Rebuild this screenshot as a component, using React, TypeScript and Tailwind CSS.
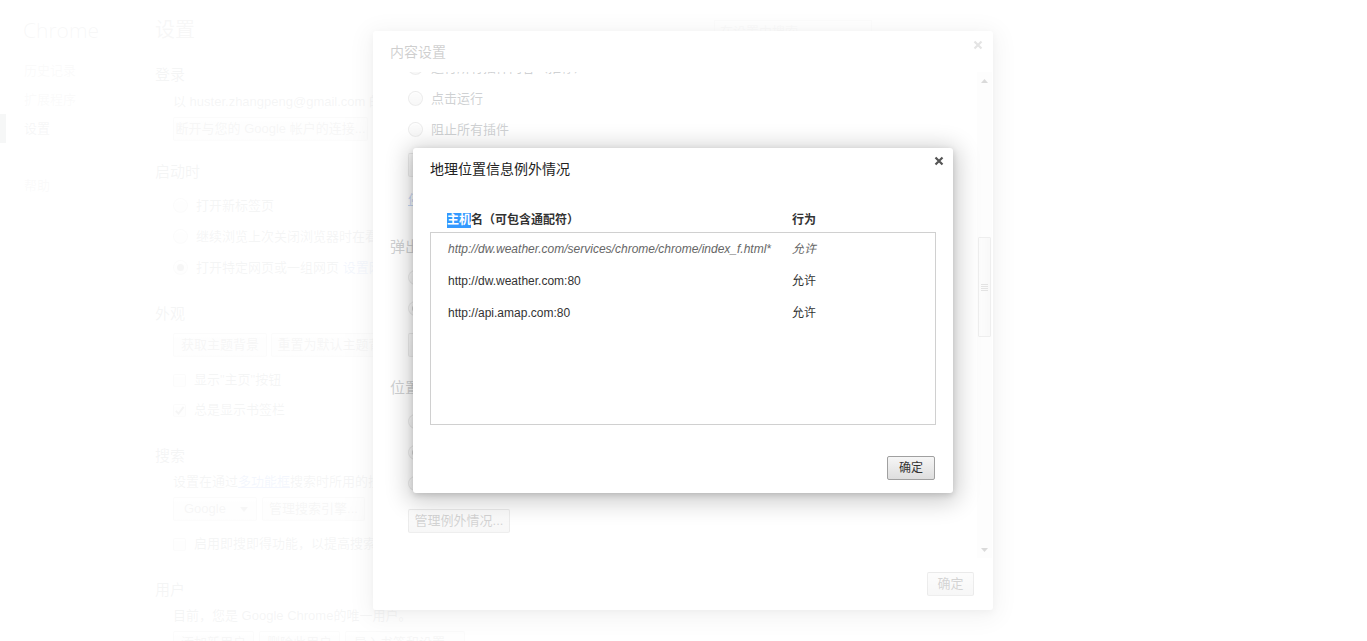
import type { ReactNode } from "react";

const FONT = "font-['Liberation_Sans','Noto_Sans_CJK_SC',sans-serif]";

function Radio({ checked = false }: { checked?: boolean }) {
  return (
    <span className="flex h-[15px] w-[15px] shrink-0 items-center justify-center rounded-full border border-black/25 bg-linear-to-b from-[#f2f2f2] to-[#dedede] shadow-[inset_0_1px_1px_white]">
      {checked && <span className="h-[7px] w-[7px] rounded-full bg-[#4a4a4a]" />}
    </span>
  );
}

function Checkbox({ checked = false }: { checked?: boolean }) {
  return (
    <span className="flex h-[13px] w-[13px] shrink-0 items-center justify-center rounded-[2px] border border-black/25 bg-linear-to-b from-[#f2f2f2] to-[#dedede]">
      {checked && (
        <svg viewBox="0 0 12 12" className="h-[11px] w-[11px]">
          <path d="M2 6.5 L5 9.5 L10.5 2" fill="none" stroke="#333" strokeWidth="2" />
        </svg>
      )}
    </span>
  );
}

function Btn({ children, className = "" }: { children: ReactNode; className?: string }) {
  return (
    <div
      className={`flex h-[24px] shrink-0 items-center justify-center whitespace-nowrap rounded-[2px] border border-black/25 bg-linear-to-b from-[#f2f2f2] to-[#dcdcdc] px-[10px] text-[13px] text-[#444] ${className}`}
    >
      {children}
    </div>
  );
}

function RadioRow({ label, checked }: { label: ReactNode; checked?: boolean }) {
  return (
    <div className="flex h-[31px] items-center gap-[8px] whitespace-nowrap">
      <Radio checked={checked} />
      <span>{label}</span>
    </div>
  );
}

function CheckRow({ label, checked }: { label: ReactNode; checked?: boolean }) {
  return (
    <div className="flex h-[30px] items-center gap-[8px] whitespace-nowrap">
      <Checkbox checked={checked} />
      <span>{label}</span>
    </div>
  );
}

function Heading({ children, className = "" }: { children: ReactNode; className?: string }) {
  return <div className={`h-[20px] text-[15px] leading-[20px] text-[#303942] ${className}`}>{children}</div>;
}

function CloseX({ className = "", color }: { className?: string; color: string }) {
  return (
    <svg viewBox="0 0 10 10" className={`absolute h-[10px] w-[10px] ${className}`}>
      <path d="M1.5 1.5 L8.5 8.5 M8.5 1.5 L1.5 8.5" stroke={color} strokeWidth="2.2" />
    </svg>
  );
}

function SettingsPage() {
  return (
    <div className="flex text-[13px] text-[#303942]">
      <aside className="w-[155px] shrink-0">
        <div className="pl-[23px] pt-[16px] font-['Open_Sans',sans-serif] text-[21px] font-light leading-[28px] text-[#5c6166]">
          Chrome
        </div>
        <nav className="mt-[12px] text-[#999]">
          <div className="h-[29px] pl-[24px] leading-[29px]">历史记录</div>
          <div className="h-[29px] pl-[24px] leading-[29px]">扩展程序</div>
          <div className="h-[29px] border-l-[6px] border-[#4e5764] pl-[18px] leading-[29px] text-[#464e5a]">设置</div>
          <div className="mt-[28px] h-[29px] pl-[24px] leading-[29px]">帮助</div>
        </nav>
      </aside>

      <main className="w-[717px] shrink-0">
        <div className="flex h-[60px] items-start justify-between">
          <h1 className="mt-[16px] text-[20px] leading-[28px] text-[#5c6166]">设置</h1>
          <div className="mt-[20px] flex h-[24px] w-[158px] items-center border border-black/20 px-[5px] text-[13px] text-[#999]">
            在设置中搜索
          </div>
        </div>

        <Heading className="mt-[5px]">登录</Heading>
        <div className="pl-[18px]">
          <div className="mt-[7px] h-[20px] whitespace-nowrap leading-[20px]">
            以 huster.zhangpeng@gmail.com 的身份登录。您的个性化设置已同步到您的 Google 帐户。
          </div>
          <Btn className="mt-[5px] w-[195px]">断开与您的 Google 帐户的连接...</Btn>
        </div>

        <Heading className="mt-[21px]">启动时</Heading>
        <div className="mt-[8px] pl-[18px]">
          <RadioRow label="打开新标签页" />
          <RadioRow label="继续浏览上次关闭浏览器时在看的网页" />
          <RadioRow
            checked
            label={
              <>
                打开特定网页或一组网页 <span className="text-[#15c]">设置网页</span>
              </>
            }
          />
        </div>

        <Heading className="mt-[21px]">外观</Heading>
        <div className="pl-[18px]">
          <div className="mt-[9px] flex gap-[4px]">
            <Btn className="w-[94px]">获取主题背景</Btn>
            <Btn className="w-[130px]">重置为默认主题背景</Btn>
          </div>
          <div className="mt-[8px]">
            <CheckRow label={'显示"主页"按钮'} />
            <CheckRow checked label="总是显示书签栏" />
          </div>
        </div>

        <Heading className="mt-[21px]">搜索</Heading>
        <div className="pl-[18px]">
          <div className="mt-[6px] h-[20px] whitespace-nowrap leading-[20px]">
            设置在通过<span className="text-[#15c] underline">多功能框</span>搜索时所用的搜索引擎。
          </div>
          <div className="mt-[5px] flex gap-[5px]">
            <div className="flex h-[24px] w-[84px] items-center justify-between rounded-[2px] border border-black/25 bg-linear-to-b from-[#f2f2f2] to-[#dcdcdc] pl-[10px] pr-[8px] text-[#444]">
              Google
              <svg viewBox="0 0 8 5" className="h-[5px] w-[8px]">
                <path d="M0 0 L8 0 L4 5 Z" fill="#555" />
              </svg>
            </div>
            <Btn className="w-[103px]">管理搜索引擎...</Btn>
          </div>
          <div className="mt-[8px]">
            <CheckRow label="启用即搜即得功能，以提高搜索速度" />
          </div>
        </div>

        <Heading className="mt-[21px]">用户</Heading>
        <div className="pl-[18px]">
          <div className="mt-[6px] h-[20px] whitespace-nowrap leading-[20px]">目前，您是 Google Chrome的唯一用户。</div>
          <div className="mt-[5px] flex gap-[5px]">
            <Btn className="w-[81px]">添加新用户</Btn>
            <Btn className="w-[81px]">删除此用户</Btn>
            <Btn className="w-[120px]">导入书签和设置...</Btn>
          </div>
        </div>
      </main>
    </div>
  );
}

function ScrollBar() {
  return (
    <div className="mr-[1px] flex w-[15px] shrink-0 flex-col bg-[#f4f4f4]">
      <div className="flex h-[17px] items-center justify-center">
        <svg viewBox="0 0 7 4" className="h-[4px] w-[7px]">
          <path d="M0 4 L7 4 L3.5 0 Z" fill="#606060" />
        </svg>
      </div>
      <div className="mx-[1px] mt-[148px] flex h-[100px] items-center justify-center rounded-[1px] border border-[#b5b5b5] bg-linear-to-r from-[#f4f4f4] to-[#e2e2e2]">
        <div className="flex w-[7px] flex-col gap-[1px]">
          <div className="h-[1px] bg-[#888]" />
          <div className="h-[1px] bg-[#888]" />
          <div className="h-[1px] bg-[#888]" />
          <div className="h-[1px] bg-[#888]" />
        </div>
      </div>
      <div className="flex-1" />
      <div className="flex h-[17px] items-center justify-center">
        <svg viewBox="0 0 7 4" className="h-[4px] w-[7px]">
          <path d="M0 0 L7 0 L3.5 4 Z" fill="#606060" />
        </svg>
      </div>
    </div>
  );
}

function ContentSettingsDialog() {
  return (
    <div className="absolute left-[373px] top-[31px] flex h-[579px] w-[620px] flex-col rounded-[3px] bg-white text-[13px] text-[#303942] shadow-[0_4px_23px_5px_rgba(0,0,0,0.2),0_2px_6px_rgba(0,0,0,0.15)]">
      <div className="relative h-[41px] shrink-0 pl-[17px] pt-[11px] text-[14px] leading-[20px] text-[#333]">
        内容设置
        <CloseX className="right-[10px] top-[9px]" color="#8a8a8a" />
      </div>
      <div className="flex h-[486px] shrink-0">
        <div className="flex-1 overflow-hidden pl-[17px]">
          <div className="-mt-[20px]">
            <div className="pl-[18px]">
              <RadioRow checked label="运行所有插件内容（推荐）" />
              <RadioRow label="点击运行" />
              <RadioRow label="阻止所有插件" />
              <Btn className="mt-[8px] w-[102px]">管理例外情况...</Btn>
              <div className="mt-[13px] h-[20px] leading-[20px] text-[#15c] underline">停用单个插件...</div>
            </div>
            <Heading className="mt-[27px]">弹出式窗口</Heading>
            <div className="mt-[5px] pl-[18px]">
              <RadioRow label="允许所有网站显示弹出式窗口" />
              <RadioRow checked label="不允许任何网站显示弹出式窗口（推荐）" />
              <Btn className="mt-[9px] w-[102px]">管理例外情况...</Btn>
            </div>
            <Heading className="mt-[21px]">位置</Heading>
            <div className="mt-[8px] pl-[18px]">
              <RadioRow label="允许所有网站跟踪您的物理位置" />
              <RadioRow checked label="在网站尝试跟踪您的物理位置时询问（推荐）" />
              <RadioRow label="不允许任何网站跟踪您的物理位置" />
              <Btn className="mt-[10px] w-[102px]">管理例外情况...</Btn>
            </div>
            <Heading className="mt-[40px]">通知</Heading>
          </div>
        </div>
        <ScrollBar />
      </div>
      <div className="flex flex-1 items-start justify-end pr-[19px] pt-[14px]">
        <Btn className="w-[47px] px-0">确定</Btn>
      </div>
    </div>
  );
}

const rows = [
  { host: "http://dw.weather.com/services/chrome/chrome/index_f.html*", action: "允许", pattern: true },
  { host: "http://dw.weather.com:80", action: "允许", pattern: false },
  { host: "http://api.amap.com:80", action: "允许", pattern: false },
];

function GeoExceptionsDialog() {
  return (
    <div className="absolute left-[413px] top-[148px] flex h-[345px] w-[540px] flex-col rounded-[3px] bg-white text-[12px] text-[#333] shadow-[0_4px_23px_5px_rgba(0,0,0,0.2),0_2px_6px_rgba(0,0,0,0.15)]">
      <div className="relative pl-[17px] pt-[11px] text-[14px] leading-[20px] text-[#222]">
        地理位置信息例外情况
        <CloseX className="right-[9px] top-[8px]" color="#555" />
      </div>
      <div className="mx-[17px] mt-[33px]">
        <div className="flex h-[16px] items-center font-bold leading-[16px]">
          <div className="w-[362px] pl-[17px]">
            <span className="inline-block bg-[#3399ff] leading-[15px] text-white">主机</span>名（可包含通配符）
          </div>
          <div>行为</div>
        </div>
        <div className="mt-[4px] h-[193px] border border-[#d0d0d0]">
          {rows.map((r) => (
            <div
              key={r.host}
              className={`flex h-[32px] items-center whitespace-nowrap ${r.pattern ? "italic text-[#666]" : "text-[#333]"}`}
            >
              <div className="w-[361px] pl-[17px]">{r.host}</div>
              <div>{r.action}</div>
            </div>
          ))}
        </div>
      </div>
      <div className="mt-[31px] flex justify-end pr-[18px]">
        <div className="flex h-[24px] w-[48px] items-center justify-center rounded-[2px] border border-[#a0a0a0] bg-linear-to-b from-[#f6f6f6] to-[#dedede] text-[12px] text-[#333]">
          确定
        </div>
      </div>
    </div>
  );
}

export default function App() {
  return (
    <div className={`relative h-[641px] w-full overflow-hidden bg-white ${FONT}`}>
      <SettingsPage />
      <div className="absolute inset-0 bg-white/[0.78]" />
      <ContentSettingsDialog />
      <div className="absolute inset-0 bg-white/[0.77]" />
      <GeoExceptionsDialog />
    </div>
  );
}
